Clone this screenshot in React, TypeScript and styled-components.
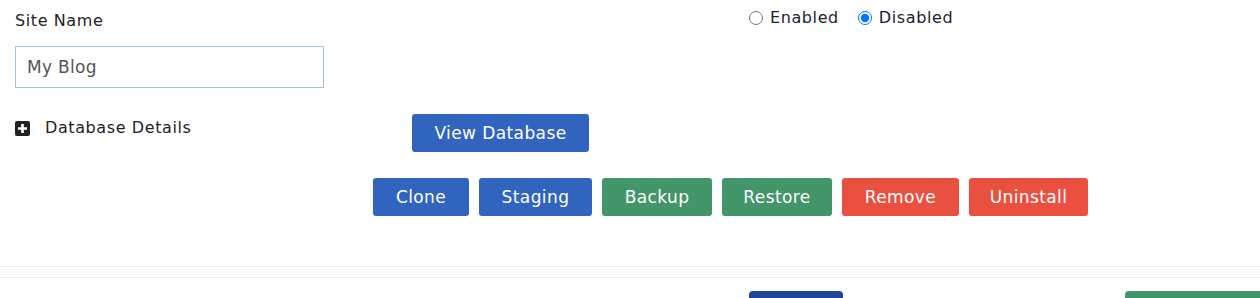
import styled, { createGlobalStyle } from 'styled-components';

const GlobalStyle = createGlobalStyle`
  body {
    margin: 0;
    background: #fff;
    font-family: "DejaVu Sans", "Liberation Sans", sans-serif;
    color: #212529;
  }
  * { box-sizing: border-box; }
`;

const Page = styled.div`
  padding: 0 15px;
  width: 1260px;
  overflow: hidden;
  height: 298px;
  letter-spacing: 0.6px;
`;
const TopRow = styled.div`
  display: grid;
  grid-template-columns: 734px 1fr;
  align-items: start;
`;
const Field = styled.div`
  display: flex;
  flex-direction: column;
`;
const Label = styled.label`
  padding-top: 9px;
  font-size: 16px;
  line-height: 24px;
  color: #222;
`;
const TextInput = styled.input`
  margin-top: 13px;
  width: 309px;
  height: 42px;
  padding: 0 11px;
  border: 1px solid #a3c2dc;
  font-family: inherit;
  font-size: 17px;
  letter-spacing: 0.3px;
  color: #555;
  outline: none;
`;
const RadioGroup = styled.div`
  display: flex;
  align-items: center;
  gap: 19px;
  padding-top: 6px;
  font-size: 16px;
  line-height: 24px;
  color: #1d1d2f;
`;
const RadioLabel = styled.label`
  display: flex;
  align-items: center;
  gap: 7px;
  input {
    margin: 0;
    width: 14px;
    height: 14px;
  }
`;
const DbRow = styled.div`
  display: grid;
  grid-template-columns: 397px auto;
  margin-top: 26px;
  align-items: start;
`;
const Toggle = styled.div`
  display: flex;
  align-items: center;
  gap: 15px;
  padding-top: 2px;
  font-size: 16px;
  line-height: 24px;
  color: #222;
`;
const PlusIcon = styled.span`
  display: inline-flex;
  width: 15px;
  height: 15px;
  border-radius: 2px;
  background: #222;
  align-items: center;
  justify-content: center;
`;
const Button = styled.button<{ $tone: string; $w: number }>`
  width: ${(p) => p.$w}px;
  height: 38px;
  padding: 0;
  border: none;
  border-radius: 3px;
  background: ${(p) => p.$tone};
  color: #fff;
  font-family: inherit;
  font-size: 17px;
  letter-spacing: 0.4px;
  cursor: pointer;
`;
const ActionRow = styled.div`
  display: flex;
  gap: 10px;
  margin-top: 26px;
  padding-left: 358px;
`;
const Divider = styled.div<{ $top: number }>`
  height: 1px;
  background: #ebebeb;
  margin: ${(p) => p.$top}px -15px 0;
`;
const Footer = styled.div`
  display: grid;
  grid-template-columns: 734px 376px 1fr;
  margin-top: 13px;
`;
const FooterButton = styled.div<{ $tone: string; $w: number }>`
  grid-column: ${(p) => (p.$tone === '#1f4599' ? 2 : 3)};
  width: ${(p) => p.$w}px;
  height: 38px;
  border-radius: 4px;
  background: ${(p) => p.$tone};
`;

const BLUE = '#3164be';
const GREEN = '#43956a';
const RED = '#ea5040';

function App() {
  return (
    <>
      <GlobalStyle />
      <Page>
        <TopRow>
          <Field>
            <Label>Site Name</Label>
            <TextInput defaultValue="My Blog" />
          </Field>
          <RadioGroup>
            <RadioLabel>
              <input type="radio" name="status" />
              Enabled
            </RadioLabel>
            <RadioLabel>
              <input type="radio" name="status" defaultChecked />
              Disabled
            </RadioLabel>
          </RadioGroup>
        </TopRow>

        <DbRow>
          <Toggle>
            <PlusIcon>
              <svg width="9" height="9" viewBox="0 0 9 9">
                <path d="M3.2 0h2.6v3.2H9v2.6H5.8V9H3.2V5.8H0V3.2h3.2z" fill="#fff" />
              </svg>
            </PlusIcon>
            Database Details
          </Toggle>
          <Button $tone={BLUE} $w={177}>View Database</Button>
        </DbRow>

        <ActionRow>
          <Button $tone={BLUE} $w={96}>Clone</Button>
          <Button $tone={BLUE} $w={113}>Staging</Button>
          <Button $tone={GREEN} $w={110}>Backup</Button>
          <Button $tone={GREEN} $w={110}>Restore</Button>
          <Button $tone={RED} $w={117}>Remove</Button>
          <Button $tone={RED} $w={119}>Uninstall</Button>
        </ActionRow>

        <Divider $top={50} />
        <Divider $top={10} />

        <Footer>
          <FooterButton $tone="#1f4599" $w={94} />
          <FooterButton $tone={GREEN} $w={160} />
        </Footer>
      </Page>
    </>
  );
}

export default App;
